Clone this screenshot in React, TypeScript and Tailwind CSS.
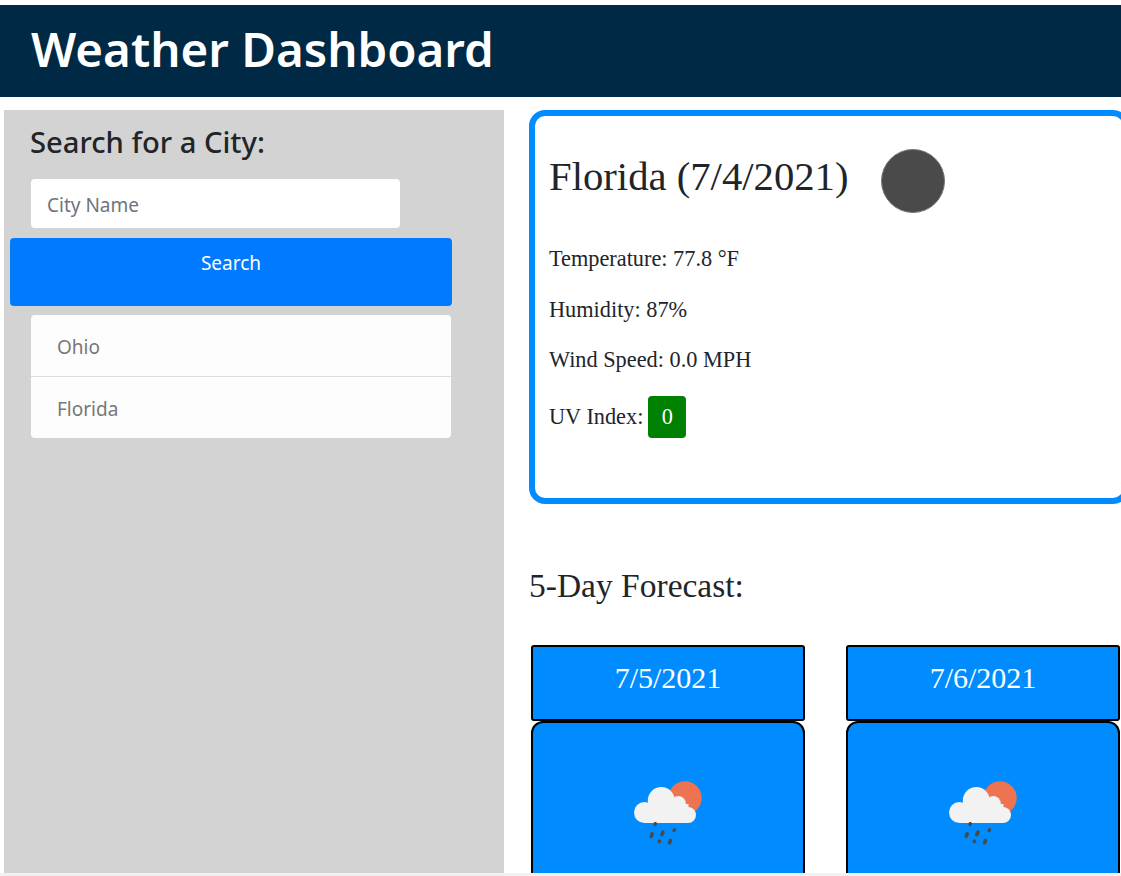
const sans = "font-['Noto_Sans','Open_Sans',sans-serif]";
const serif = "font-['Liberation_Serif',serif]";

function RainIcon() {
  return (
    <svg width="70" height="70" viewBox="0 0 70 70">
      <circle cx="52" cy="20" r="16.700" fill="#ee7350" />
      <g fill="#f2f2f2">
        <circle cx="11.500" cy="34.500" r="10.500" />
        <circle cx="28.300" cy="22.500" r="13.500" />
        <circle cx="45.300" cy="25.500" r="7.500" />
        <circle cx="55" cy="37" r="8" />
        <rect x="11.500" y="26" width="44" height="19" />
      </g>
      <g stroke="#4a4a4a" strokeWidth="3.600" strokeLinecap="round">
        <path d="M22.200 45.800l-.2 .6" />
        <path d="M19.300 55.800l-1.100 2.500" />
        <path d="M29.900 54.200l-1.100 2.500" />
        <path d="M41.500 51.800l-.4 .6" />
        <path d="M26.500 63.200l-.3 .4" />
        <path d="M37.500 62.500l-1 2.400" />
      </g>
    </svg>
  );
}

function ForecastCard({ date }: { date: string }) {
  return (
    <div className="w-[274px] shrink-0">
      <div className={`h-[76px] bg-[#008cff] border-2 border-black rounded-[3px] pt-[15px] text-center text-white text-[30px] leading-[32px] ${serif}`}>
        {date}
      </div>
      <div className="h-[200px] bg-[#008cff] border-2 border-black rounded-[12px] flex justify-center pt-[55px]">
        <RainIcon />
      </div>
    </div>
  );
}

export default function App() {
  return (
    <div className="h-[876px] overflow-hidden bg-white relative">
      <header className="mt-[5px] h-[92px] bg-[#002945] pl-[31px] pt-[10px] inline-block w-full align-top">
        <h1 className={`text-white text-[47.500px] leading-[68px] font-semibold ${sans}`}>Weather Dashboard</h1>
      </header>

      <div className="flex pl-[4px] mt-[13px] h-[763px]">
        <aside className={`w-[500px] shrink-0 bg-[#d3d3d3] ${sans}`}>
          <h2 className="ml-[26px] mt-[12px] text-[29.200px] leading-[40px] font-medium text-[#212529]">Search for a City:</h2>
          <div className="ml-[27px] mt-[17px] w-[369px] h-[49px] bg-white rounded-[4px] pl-[16px] pt-[4px] flex items-center text-[19px] text-[#6c757d]">
            City Name
          </div>
          <button className="block ml-[6px] mt-[10px] w-[442px] h-[68px] bg-[#007bff] rounded-[4px] text-white text-[19px] leading-[27px] pb-[18px] text-center">
            Search
          </button>
          <ul className="ml-[27px] mt-[9px] w-[420px] bg-[#fdfdfd] rounded-[4px] text-[19px] text-[#777777]">
            <li className="h-[62px] pl-[26px] pt-[4px] flex items-center border-b border-[#dddddd]">Ohio</li>
            <li className="h-[61px] pl-[26px] pt-[4px] flex items-center">Florida</li>
          </ul>
        </aside>

        <main className={`ml-[25px] w-[600px] shrink-0 text-[#212529] ${serif}`}>
          <section className="w-[600px] h-[394px] border-[6px] border-[#008cff] rounded-[16px] pl-[14px]">
            <div className="flex items-center pt-[33px]">
              <h2 className="text-[40.700px] leading-[50px] pb-[8px]">Florida (7/4/2021)</h2>
              <div className="ml-[33px] w-[64px] h-[64px] rounded-full bg-[#4a4a4a] border border-[#777777]" />
            </div>
            <p className="mt-[31px] text-[22.300px] leading-[30px]">Temperature: 77.8 °F</p>
            <p className="mt-[21px] text-[22.300px] leading-[30px]">Humidity: 87%</p>
            <p className="mt-[20px] text-[22.300px] leading-[30px]">Wind Speed: 0.0 MPH</p>
            <div className="mt-[21px] flex items-center text-[22.300px]">
              <span>UV Index:</span>
              <span className="ml-[5px] w-[38px] h-[42px] bg-[#008000] rounded-[4px] text-white flex items-center justify-center">0</span>
            </div>
          </section>

          <h3 className="mt-[62px] text-[33.500px] leading-[40px]">5-Day Forecast:</h3>

          <div className="flex gap-[41px] mt-[39px] ml-[2px]">
            <ForecastCard date="7/5/2021" />
            <ForecastCard date="7/6/2021" />
          </div>
        </main>
      </div>

      <div className="absolute bottom-0 left-0 right-0 h-[3px] bg-[#f1f1f1]" />
    </div>
  );
}
